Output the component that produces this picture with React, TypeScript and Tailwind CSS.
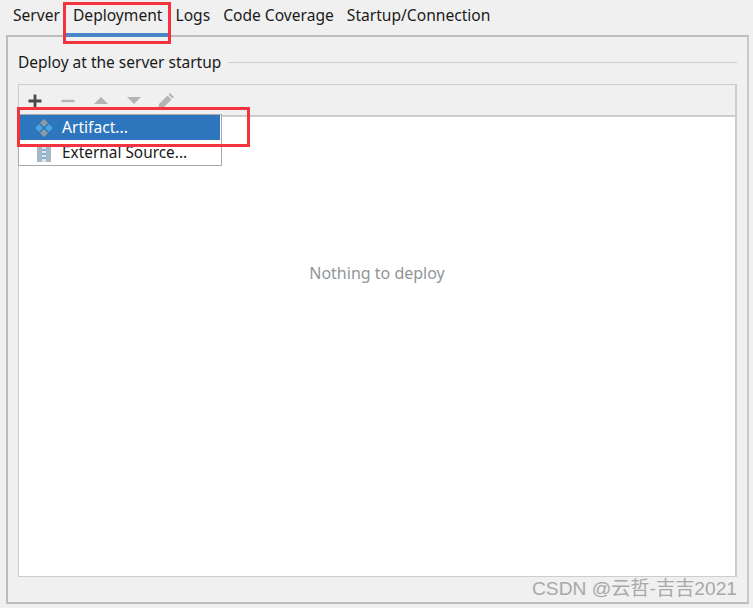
const tabs = ["Server", "Deployment", "Logs", "Code Coverage", "Startup/Connection"];

function PlusIcon() {
  return (
    <svg width="16" height="16" viewBox="0 0 16 16">
      <path d="M1.500 8h13M8 1.500v13" stroke="#4a4a4a" strokeWidth="2.8" />
    </svg>
  );
}

function ArtifactIcon() {
  return (
    <svg width="20" height="20" viewBox="0 0 20 20">
      <path d="M10 1l4 4-4 4-4-4z" fill="#8b99a5" />
      <path d="M5 6l4 4-4 4-4-4z" fill="#4aa6dc" />
      <path d="M15 6l4 4-4 4-4-4z" fill="#4aa6dc" />
      <path d="M10 11l4 4-4 4-4-4z" fill="#8b99a5" />
    </svg>
  );
}

function ArchiveIcon() {
  return (
    <svg width="14" height="18" viewBox="0 0 14 18">
      <rect x="0" y="0" width="14" height="18" fill="#a9b7c2" />
      <rect x="5" y="0" width="4" height="18" fill="#d9e6ee" />
      <path d="M5 2h4M5 6h4M5 10h4M5 14h4" stroke="#5aa7d6" strokeWidth="1.5" />
    </svg>
  );
}

export default function App() {
  return (
    <div className="relative h-[608px] w-[753px] overflow-hidden bg-[#f0f0f0] font-['Noto_Sans','Open_Sans',sans-serif] text-[15.6px] text-[#1a1a1a]">
      <div className="flex h-[35px] pl-[6.5px]">
        {tabs.map((tab) => (
          <div
            key={tab}
            className={`flex h-[37px] items-start px-[6.5px] pt-[4px] ${tab === "Deployment" ? "relative z-10 border-b-4 border-[#4a86c8]" : ""}`}
          >
            {tab}
          </div>
        ))}
      </div>

      <div className="mx-[6px] flex h-[569px] w-[743px] flex-col border-2 border-[#bdbdbd] border-r-[#c8c8c8] px-[10px] pb-[25px] pr-[10px]">
        <div className="flex h-[47px] shrink-0 items-center gap-[7px] pt-[4px] text-[15.5px]">
          <span>Deploy at the server startup</span>
          <div className="h-px flex-1 bg-[#cdcdcd]" />
        </div>

        <div className="flex flex-1 flex-col border border-[#cdcdcd] border-r-2">
          <div className="flex h-[30px] shrink-0 items-center gap-[17px] pl-[8px] pt-[2px]">
            <PlusIcon />
            <svg width="16" height="16" viewBox="0 0 16 16">
              <path d="M1.500 8h13" stroke="#b4b4b4" strokeWidth="2.4" />
            </svg>
            <svg width="16" height="16" viewBox="0 0 16 16">
              <path d="M8 4l7 7H1z" fill="#b4b4b4" />
            </svg>
            <svg width="16" height="16" viewBox="0 0 16 16">
              <path d="M1 4h14l-7 7z" fill="#b4b4b4" />
            </svg>
            <svg className="-ml-[2px]" width="18" height="18" viewBox="0 0 18 18">
              <path d="M1 17l1-5 8.500-8.500 4 4L6 16zM11.500 2.500l1.500-1.500 4 4-1.500 1.500z" fill="#b4b4b4" />
            </svg>
          </div>
          <div className="flex flex-1 items-center justify-center border-t-2 border-[#cdcdcd] bg-white pb-[148px] text-[16px] text-[#8f959a]">
            Nothing to deploy
          </div>
        </div>
      </div>

      <div className="absolute left-[18px] top-[114px] z-10 h-[52px] w-[204px] border border-[#a9a9a9] bg-white pl-px">
        <div className="flex h-[25px] w-[200px] items-center bg-[#2d76bd] text-white">
          <span className="ml-[14px] w-[28px]"><ArtifactIcon /></span>
          Artifact...
        </div>
        <div className="flex h-[25px] items-center text-[15.4px]">
          <span className="ml-[17px] w-[25px]"><ArchiveIcon /></span>
          External Source...
        </div>
      </div>

      <div className="absolute left-[63px] top-[2px] z-20 h-[42px] w-[108px] border-[3px] border-[#f5333f]" />
      <div className="absolute left-[17px] top-[107px] z-20 h-[40px] w-[233px] border-[3px] border-[#f5333f]" />

      <div className="absolute left-[532px] top-[576px] z-20 font-['Liberation_Sans','Noto_Sans_CJK_SC',sans-serif] text-[19.2px] leading-[26px] text-[#a8a8a8]">
        CSDN @云哲-吉吉2021
      </div>
    </div>
  );
}
